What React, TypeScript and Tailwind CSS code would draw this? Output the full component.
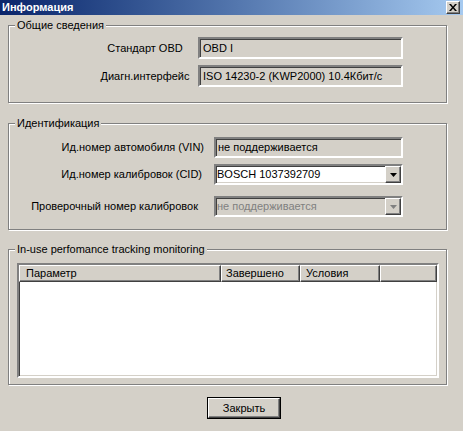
import React from 'react';

const font = "font-['Liberation_Sans',Arial,sans-serif] text-[11px] leading-[13px]";

// sunken 2px classic border
const sunken =
  'border-2 border-t-[#808080] border-l-[#808080] border-b-white border-r-white shadow-[inset_1px_1px_0_#404040,inset_-1px_-1px_0_#d4d0c8]';
const raised =
  'border border-t-white border-l-white border-b-[#404040] border-r-[#404040] shadow-[inset_-1px_-1px_0_#808080]';

function Group({ title, className, children }: { title: string; className: string; children?: React.ReactNode }) {
  return (
    <div
      className={`relative mx-[8px] w-[439px] border border-[#808080] shadow-[inset_1px_1px_0_#fff,1px_1px_0_#fff] ${className}`}
    >
      <span className="absolute left-[6px] top-[-7px] bg-[#d4d0c8] px-[2px] text-black">{title}</span>
      {children}
    </div>
  );
}

function Arrow({ disabled }: { disabled?: boolean }) {
  return (
    <div className={`flex h-full w-[16px] items-center justify-center bg-[#d4d0c8] ${raised}`}>
      <svg width="7" height="4" viewBox="0 0 7 4">
        <path d="M0 0h7L3.5 4z" fill={disabled ? '#808080' : '#000'} />
      </svg>
    </div>
  );
}

export default function App() {
  return (
    <div className={`w-[463px] h-[431px] bg-[#d4d0c8] overflow-hidden ${font}`}>
      {/* title bar */}
      <div className="flex h-[15px] items-center justify-between bg-gradient-to-r from-[#0a246a] to-[#a6caf0] pl-[2px] pr-[3px]">
        <span className="font-bold text-white text-[11px] leading-[15px]">Информация</span>
        <div className={`flex h-[13px] w-[14px] items-center justify-center bg-[#d4d0c8] ${raised}`}>
          <svg width="8" height="7" viewBox="0 0 8 7">
            <path d="M0 0h2l2 2.5L6 0h2L5 3.5 8 7H6L4 4.5 2 7H0l3-3.5z" fill="#000" />
          </svg>
        </div>
      </div>

      {/* Общие сведения */}
      <Group title="Общие сведения" className="mt-[10px] h-[78px]">
        <div className="flex flex-col gap-[6px] pt-[11px] pl-[83px]">
          <div className="flex items-center">
            <div className="w-[106px] text-center">Стандарт OBD</div>
            <div className={`h-[22px] w-[205px] pl-[3px] leading-[18px] bg-[#d4d0c8] ${sunken}`}>OBD I</div>
          </div>
          <div className="flex items-center">
            <div className="w-[106px] text-center">Диагн.интерфейс</div>
            <div className={`h-[22px] w-[205px] pl-[3px] leading-[18px] bg-[#d4d0c8] ${sunken}`}>
              ISO 14230-2 (KWP2000) 10.4Кбит/с
            </div>
          </div>
        </div>
      </Group>

      {/* Идентификация */}
      <Group title="Идентификация" className="mt-[20px] h-[107px]">
        <div className="flex flex-col pt-[13px]">
          <div className="flex items-center">
            <div className="w-[198px] pr-[3px] text-right">Ид.номер автомобиля (VIN)</div>
            <div className={`ml-[7px] h-[21px] w-[189px] pl-[2px] leading-[17px] bg-[#d4d0c8] ${sunken}`}>
              не поддерживается
            </div>
          </div>
          <div className="mt-[6px] flex items-center">
            <div className="w-[198px] pr-[5px] text-right">Ид.номер калибровок (CID)</div>
            <div className={`ml-[7px] flex h-[21px] w-[189px] bg-white ${sunken}`}>
              <span className="flex-1 pl-[1px] leading-[17px]">BOSCH 1037392709</span>
              <Arrow />
            </div>
          </div>
          <div className="mt-[11px] flex items-center">
            <div className="w-[198px] pr-[9px] text-right">Проверочный номер калибровок</div>
            <div className={`ml-[7px] flex h-[21px] w-[189px] bg-[#d4d0c8] ${sunken}`}>
              <span className="flex-1 pl-[1px] leading-[17px] text-[#808080]">не поддерживается</span>
              <Arrow disabled />
            </div>
          </div>
        </div>
      </Group>

      {/* In-use perfomance tracking monitoring */}
      <Group title="In-use perfomance tracking monitoring" className="mt-[19px] h-[136px]">
        <div className={`ml-[8px] mt-[13px] h-[115px] w-[422px] bg-white ${sunken}`}>
          <div className="flex h-[17px]">
            <div className={`w-[202px] bg-[#d4d0c8] pl-[6px] leading-[14px] ${raised}`}>Параметр</div>
            <div className={`w-[79px] bg-[#d4d0c8] pl-[4px] leading-[14px] ${raised}`}>Завершено</div>
            <div className={`w-[80px] bg-[#d4d0c8] pl-[5px] leading-[14px] ${raised}`}>Условия</div>
            <div className={`flex-1 bg-[#d4d0c8] ${raised}`} />
          </div>
        </div>
      </Group>

      <div className="mt-[12px] pl-[207px]">
        <button className="h-[22px] w-[74px] border border-black bg-[#d4d0c8] p-0">
          <div className={`flex h-full w-full items-center justify-center ${raised}`}>Закрыть</div>
        </button>
      </div>
    </div>
  );
}
